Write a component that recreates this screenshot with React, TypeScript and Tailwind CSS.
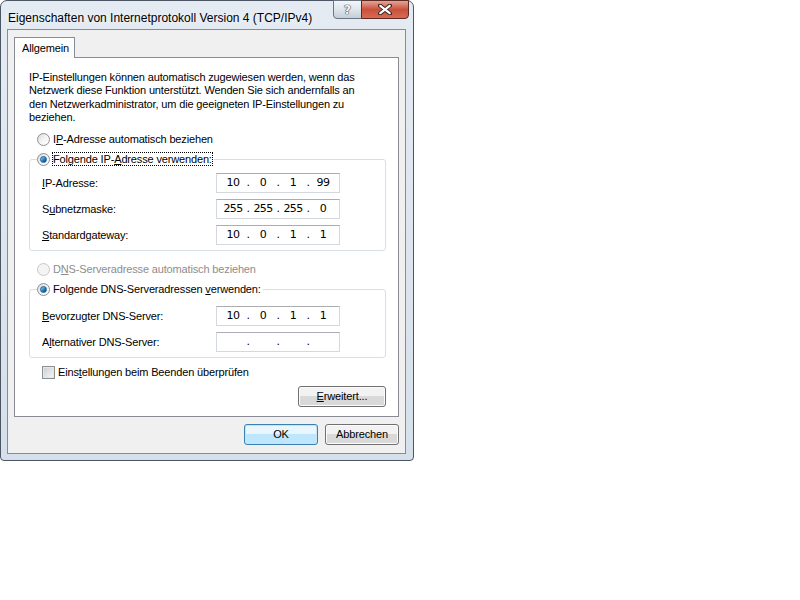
import type { ReactNode } from 'react';

const Radio = ({ checked = false, disabled = false }: { checked?: boolean; disabled?: boolean }) => (
  <span
    className={`relative flex h-[13px] w-[13px] shrink-0 items-center justify-center rounded-full border ${
      disabled
        ? 'border-[#c8c8c8] bg-[#f4f4f4]'
        : 'border-[#8e8f8f] bg-gradient-to-br from-[#d9dadb] via-[#f4f4f4] to-[#ffffff]'
    }`}
  >
    {checked && (
      <span className="h-[7px] w-[7px] rounded-full border border-[#1b5f95] bg-gradient-to-br from-[#9ad7f7] via-[#2b88c8] to-[#0c3c6c]" />
    )}
  </span>
);

const Checkbox = () => (
  <span className="flex h-[13px] w-[13px] shrink-0 items-center justify-center border border-[#8e8f8f] bg-white">
    <span className="h-[11px] w-[11px] border border-[#e6e6e6] bg-gradient-to-br from-[#cbcfd5] to-[#f6f6f6]" />
  </span>
);

const IpField = ({ parts }: { parts: string[] }) => (
  <div className="flex h-[20px] w-[124px] items-center border border-[#d3d8de] border-t-[#abadb3] bg-white pl-[4px] font-['DejaVu_Sans',sans-serif] text-[11px] tracking-[-0.6px] text-black">
    {parts.map((p, i) => (
      <div key={i} className="flex items-center">
        {i > 0 && <span className="w-[6px] text-center">.</span>}
        <span className="w-[24px] text-center">{p}</span>
      </div>
    ))}
  </div>
);

const FieldRow = ({ label, parts }: { label: ReactNode; parts: string[] }) => (
  <div className="flex h-[20px] items-center">
    <span className="w-[174px]">{label}</span>
    <IpField parts={parts} />
  </div>
);

const Button = ({ children, primary = false, width }: { children: ReactNode; primary?: boolean; width: string }) => (
  <div
    className={`flex h-[21px] items-center justify-center rounded-[3px] border ${width} ${
      primary
        ? 'border-[#3c7fb1] bg-gradient-to-b from-[#eaf6fd] from-50% to-[#bee6fd] to-50% shadow-[inset_0_0_0_1px_#c4e5f6]'
        : 'border-[#707070] bg-gradient-to-b from-[#f2f2f2] from-50% to-[#d9d9d9] to-50% shadow-[inset_0_0_0_1px_#fcfcfc]'
    }`}
  >
    {children}
  </div>
);

export default function App() {
  return (
    <div className="min-h-screen bg-white font-['Liberation_Sans',Arial,sans-serif] text-[11px] tracking-[-0.15px] text-black">
      <div className="flex h-[461px] w-[414px] flex-col rounded-t-[7px] rounded-b-[4px] border border-[#4c5563] bg-gradient-to-b from-[#e4ebf3] to-[#d6e0ea]">
        {/* title bar */}
        <div className="flex h-[28px] items-start">
          <span className="pl-[7px] pt-[8px] text-[12px] tracking-normal text-black [text-shadow:0_0_6px_#ffffff]">
            Eigenschaften von Internetprotokoll Version 4 (TCP/IPv4)
          </span>
          <div className="-mt-px ml-auto mr-[4px] flex">
            <div className="flex h-[19px] w-[29px] items-center justify-center rounded-bl-[4px] border border-[#6c7582] bg-gradient-to-b from-[#f3f6fa] via-[#dfe5ec] to-[#c4ceda]">
              <span className="font-['DejaVu_Sans',sans-serif] text-[12px] font-bold text-[#f5f7fa] [text-shadow:0_0_1px_#3b4350,0_0_1px_#3b4350,0_0_1px_#3b4350]">
                ?
              </span>
            </div>
            <div className="-ml-px flex h-[19px] w-[48px] items-center justify-center rounded-br-[4px] border border-[#5b2a24] bg-gradient-to-b from-[#e6a395] via-[#c9503c] to-[#d86a55]">
              <svg width="14" height="11" viewBox="0 0 14 11">
                <path d="M2 1.5 L12 9.5 M12 1.5 L2 9.5" stroke="#3a2420" strokeWidth="4" strokeLinecap="round" />
                <path d="M2.3 1.8 L11.7 9.2 M11.7 1.8 L2.3 9.2" stroke="#ffffff" strokeWidth="2.2" strokeLinecap="round" />
              </svg>
            </div>
          </div>
        </div>

        {/* client */}
        <div className="mb-[6px] ml-[6px] mr-[7px] flex flex-1 flex-col border border-[#838c98] bg-[#f0f0f0] px-[6px] pt-[7px]">
          <div className="relative z-10 -mb-px flex h-[21px] w-[61px] items-center border border-b-0 border-[#898c95] bg-gradient-to-b from-[#ffffff] to-[#fafafa] pl-[7px]">
            Allgemein
          </div>
          <div className="flex h-[360px] flex-col border border-[#898c95] bg-white">
            <p className="pl-[14px] pt-[13px] leading-[13.3px]">
              IP-Einstellungen können automatisch zugewiesen werden, wenn das
              <br />
              Netzwerk diese Funktion unterstützt. Wenden Sie sich andernfalls an
              <br />
              den Netzwerkadministrator, um die geeigneten IP-Einstellungen zu
              <br />
              beziehen.
            </p>

            <div className="mt-[5px] flex h-[20px] items-center gap-[3px] pl-[22px]">
              <Radio />
              <span>
                I<u>P</u>-Adresse automatisch beziehen
              </span>
            </div>

            <fieldset className="ml-[14px] mr-[12px] rounded-[3px] border border-[#d5dfe5] p-0">
              <legend className="ml-[7px] flex h-[20px] items-center gap-[3px] pr-[2px]">
                <Radio checked />
                <span className="outline-1 outline-dotted outline-black leading-[12px]">
                  Folgende IP-<u>A</u>dresse verwenden:
                </span>
              </legend>
              <div className="flex flex-col gap-[6px] pb-[5px] pl-[12px] pt-[4px]">
                <FieldRow label={<><u>I</u>P-Adresse:</>} parts={['10', '0', '1', '99']} />
                <FieldRow label={<>S<u>u</u>bnetzmaske:</>} parts={['255', '255', '255', '0']} />
                <FieldRow label={<><u>S</u>tandardgateway:</>} parts={['10', '0', '1', '1']} />
              </div>
            </fieldset>

            <div className="mt-[8px] flex h-[20px] items-center gap-[3px] pl-[22px] text-[#8d8d8d]">
              <Radio disabled />
              <span>
                D<u>N</u>S-Serveradresse automatisch beziehen
              </span>
            </div>

            <fieldset className="ml-[14px] mr-[12px] rounded-[3px] border border-[#d5dfe5] p-0">
              <legend className="ml-[7px] flex h-[20px] items-center gap-[3px] pr-[2px]">
                <Radio checked />
                <span>
                  Folgende DNS-Serveradressen <u>v</u>erwenden:
                </span>
              </legend>
              <div className="flex flex-col gap-[6px] pb-[5px] pl-[12px] pt-[7px]">
                <FieldRow label={<><u>B</u>evorzugter DNS-Server:</>} parts={['10', '0', '1', '1']} />
                <FieldRow label={<>A<u>l</u>ternativer DNS-Server:</>} parts={['', '', '', '']} />
              </div>
            </fieldset>

            <div className="mt-[4px] flex h-[20px] items-center gap-[3px] pl-[27px]">
              <Checkbox />
              <span>
                Eins<u>t</u>ellungen beim Beenden überprüfen
              </span>
            </div>

            <div className="mr-[12px] mt-[4px] flex justify-end">
              <Button width="w-[88px]">
                <u>E</u>rweitert...
              </Button>
            </div>
          </div>

          <div className="mt-[7px] flex justify-end gap-[7px]">
            <Button primary width="w-[74px]">
              OK
            </Button>
            <Button width="w-[74px]">Abbrechen</Button>
          </div>
        </div>
      </div>
    </div>
  );
}
